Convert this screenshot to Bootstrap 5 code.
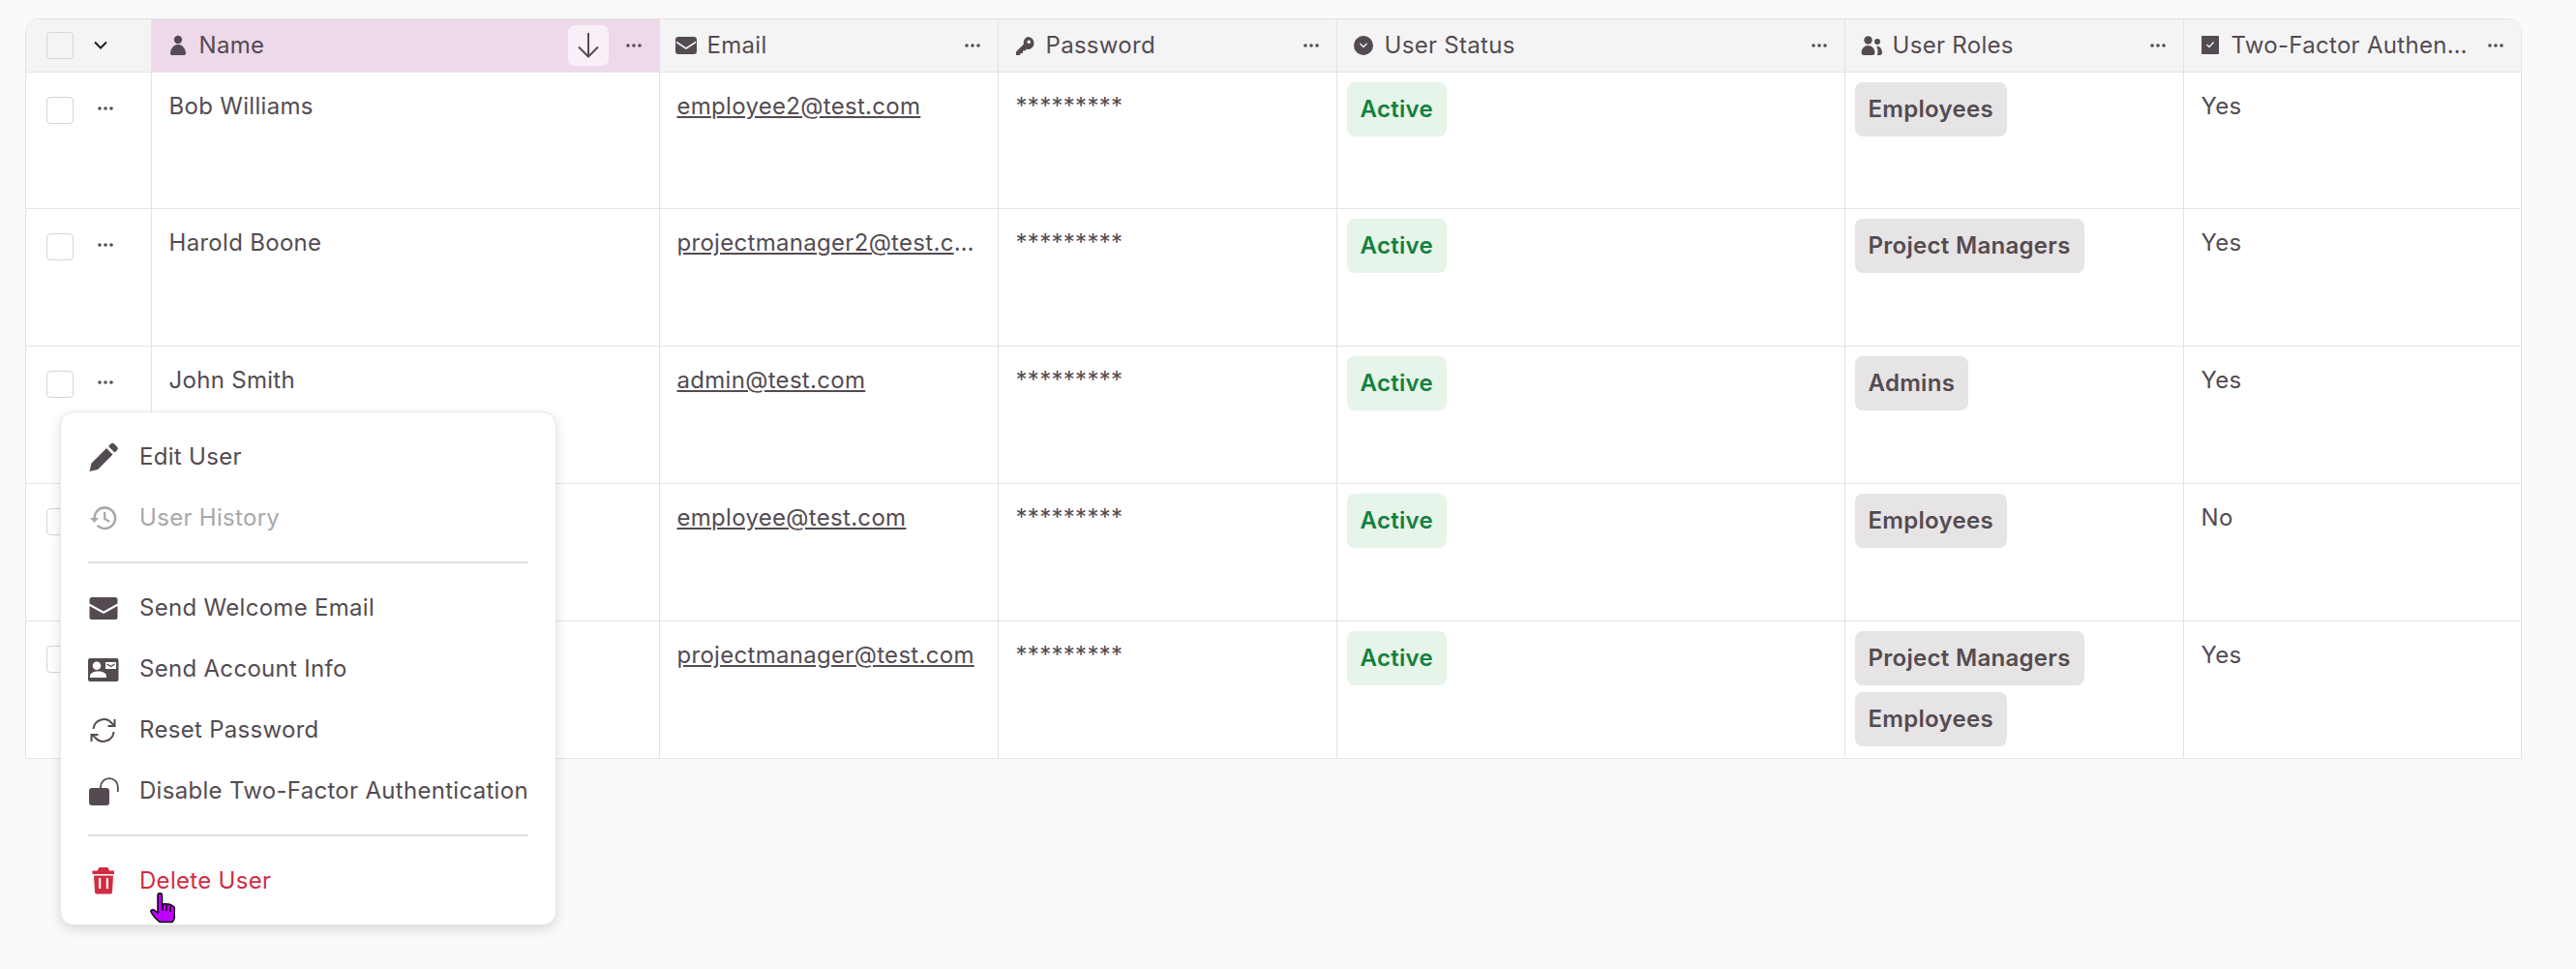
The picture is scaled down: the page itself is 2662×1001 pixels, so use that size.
<!DOCTYPE html>
<html lang="en"><head><meta charset="utf-8"><title>Users</title>
<link href="https://cdn.jsdelivr.net/npm/bootstrap@5.3.0/dist/css/bootstrap.min.css" rel="stylesheet">
<style>
html,body{height:100%}
body{background:#fafafa;font-family:Inter,"Liberation Sans",sans-serif;font-size:24px;letter-spacing:.3px;color:#544b52;position:relative;margin:0;overflow:hidden}
.page-wrap{padding:19px 56px 0 26px}
.grid-box{border:1px solid #e4e2e3;border-top-left-radius:14px;border-top-right-radius:14px;overflow:hidden;background:#fff;width:2580px}
.grid-table{table-layout:fixed;width:2578px;margin:0;border-collapse:collapse;--bs-table-bg:transparent;--bs-table-color:#544b52;color:#544b52}
.grid-table th,.grid-table td{border:0;border-right:1px solid #e4e2e3;border-bottom:1px solid #e4e2e3;vertical-align:top;font-weight:400}
.grid-table th:last-child,.grid-table td:last-child{border-right:0}
.grid-table tr:last-child td{border-bottom:0}
.grid-table th{background:#f4f4f4;height:54px;padding:1px 17px 0 16px;vertical-align:middle}
.grid-table th.sorted{background:#eed9eb}
.grid-table td{height:141.75px;padding:17px 17px 14px 18px;line-height:36px}
.grid-table td.tag-cell{padding:10px 10px 11px}
.grid-table td.sel-cell,.grid-table th.sel-cell{padding:0 0 0 21px}
.grid-table td.sel-cell{padding-top:25px}
.grid-table a{color:#544b52}
.head-flex{display:flex;align-items:center;height:100%}
.head-ico{width:22px;height:22px;fill:#544b52;margin-right:11px;flex:none}
.head-label{flex:1;min-width:0;white-space:nowrap}
.dots-ico{width:18px;height:6px;fill:#544b52;flex:none}
.row-dots{margin-left:24px;margin-bottom:4px}
.chev-ico{margin-left:21px}
.sort-chip{width:42px;height:42px;border-radius:7px;background:#f9eff8;display:flex;align-items:center;justify-content:center;margin-right:17px;flex:none}
.fake-check{width:28px;height:28px;border:1px solid #d6d4d5;border-radius:4px;background:#fff;flex:none}
th .fake-check{background:#f4f4f4}
.sel-flex{display:flex;align-items:center}
.cell-trunc{white-space:nowrap}
.pill-tag{display:block;width:max-content;font-weight:600;padding:0 14px;height:56px;line-height:56px;border-radius:8px}
.pill-tag+.pill-tag{margin-top:7px}
.pill-ok{background:#e6f4e9;color:#13803f}
.pill-gray{background:#e6e4e5;color:#544b52}
.row-menu{position:absolute;left:62px;top:425px;width:513px;padding:14px 28px;background:#fff;border:1px solid #e9e7e8;border-radius:14px;box-shadow:0 4px 12px rgba(60,50,60,.16);z-index:5}
.menu-line{display:flex;align-items:center;height:63px;white-space:nowrap;color:#544b52}
.menu-line.off{color:#aaa6a9}
.menu-line.del{color:#d12c42}
.menu-ico{width:32px;height:32px;fill:currentColor;flex:none;margin-right:21px}
.menu-sep{height:2px;background:#e2dfe0;margin:14px 0}
.hand-cursor{position:absolute;left:155px;top:922px;width:26px;height:32px;z-index:6}
</style></head><body>
<div class="page-wrap">
<div class="grid-box">
<table class="table grid-table">
<colgroup><col style="width:129px"><col style="width:525px"><col style="width:350px"><col style="width:350px"><col style="width:525px"><col style="width:350px"><col style="width:349px"></colgroup>
<thead><tr>
<th class="sel-cell"><div class="sel-flex"><span class="fake-check"></span><svg class="chev-ico" width="14" height="9" viewBox="0 0 14 9" fill="none" stroke="#1e1a1d" stroke-width="2"><path d="M1 1.500 7 7.500 13 1.500"/></svg></div></th>
<th class="sorted"><div class="head-flex"><svg class="head-ico" viewBox="0 0 22 22"><circle cx="11" cy="5" r="4.200"/><path d="M11 10c-4 0-7 3-8 8.500C3 20.500 4 21 5 21h12c1 0 2-.5 2-2.500C18 13 15 10 11 10z"/></svg><span class="head-label">Name</span><span class="sort-chip"><svg width="22" height="26" viewBox="0 0 22 26" fill="none" stroke="#544b52" stroke-width="2"><path d="M11 0V24.500M1 14.500 11 24.500 21 14.500"/></svg></span><svg class="dots-ico" viewBox="0 0 18 6"><circle cx="3" cy="3" r="1.800"/><circle cx="9" cy="3" r="1.800"/><circle cx="15" cy="3" r="1.800"/></svg></div></th>
<th><div class="head-flex"><svg class="head-ico" viewBox="0 0 22 22"><path fill-rule="evenodd" d="M3 2h16a3 3 0 0 1 3 3v12a3 3 0 0 1-3 3H3a3 3 0 0 1-3-3V5a3 3 0 0 1 3-3zM1 6.500v2l10 6.500 10-6.500v-2l-10 6.500z"/></svg><span class="head-label">Email</span><svg class="dots-ico" viewBox="0 0 18 6"><circle cx="3" cy="3" r="1.800"/><circle cx="9" cy="3" r="1.800"/><circle cx="15" cy="3" r="1.800"/></svg></div></th>
<th><div class="head-flex"><svg class="head-ico" viewBox="0 0 22 22"><path fill-rule="evenodd" d="M14 2a6.500 6.500 0 0 1 2 12.700c-1 .3-2.200.3-3.200 0L11 16.500H9V19H7l-1.500 2H2v-3.500l7.800-7.800A6.500 6.500 0 0 1 14 2zm1.200 3.500a1.800 1.800 0 1 0 0 3.600 1.800 1.800 0 0 0 0-3.600z"/></svg><span class="head-label">Password</span><svg class="dots-ico" viewBox="0 0 18 6"><circle cx="3" cy="3" r="1.800"/><circle cx="9" cy="3" r="1.800"/><circle cx="15" cy="3" r="1.800"/></svg></div></th>
<th><div class="head-flex"><svg class="head-ico" viewBox="0 0 22 22"><path fill-rule="evenodd" d="M11 1a10 10 0 1 1 0 20 10 10 0 0 1 0-20zM7 9.500l4 4 4-4-1-1-3 3-3-3z"/></svg><span class="head-label">User Status</span><svg class="dots-ico" viewBox="0 0 18 6"><circle cx="3" cy="3" r="1.800"/><circle cx="9" cy="3" r="1.800"/><circle cx="15" cy="3" r="1.800"/></svg></div></th>
<th><div class="head-flex"><svg class="head-ico" viewBox="0 0 22 22"><circle cx="7.500" cy="5.500" r="4.200"/><circle cx="17" cy="7" r="3"/><path d="M7.500 11C3.500 11 1 14 .5 18c0 2 1 3 2.500 3h9c1.500 0 2.500-1 2.500-3-.5-4-3-7-7-7z"/><path d="M16 11.500c1 1.500 1.500 4 1.500 6.500 0 1-.2 2-.8 3h2.800c1.500 0 2.500-1 2.500-2.500 0-4-2.500-7-6-7z"/></svg><span class="head-label">User Roles</span><svg class="dots-ico" viewBox="0 0 18 6"><circle cx="3" cy="3" r="1.800"/><circle cx="9" cy="3" r="1.800"/><circle cx="15" cy="3" r="1.800"/></svg></div></th>
<th><div class="head-flex"><svg class="head-ico" viewBox="0 0 22 22"><path fill-rule="evenodd" d="M3 1h16a1 1 0 0 1 1 1v17a1 1 0 0 1-1 1H3a1 1 0 0 1-1-1V2a1 1 0 0 1 1-1zM7 10.500l3 3 5-5.500-1-.9-4 4.400-2.100-2z"/></svg><span class="head-label">Two-Factor Authen…</span><svg class="dots-ico" viewBox="0 0 18 6"><circle cx="3" cy="3" r="1.800"/><circle cx="9" cy="3" r="1.800"/><circle cx="15" cy="3" r="1.800"/></svg></div></th>
</tr></thead>
<tbody>
<tr><td class="sel-cell"><div class="sel-flex"><span class="fake-check"></span><svg class="row-dots" width="18" height="6" viewBox="0 0 18 6" fill="#544b52"><circle cx="3" cy="3" r="1.800"/><circle cx="9" cy="3" r="1.800"/><circle cx="15" cy="3" r="1.800"/></svg></div></td><td>Bob Williams</td><td><div class="cell-trunc"><a href="#">employee2@test.com</a></div></td><td>*********</td><td class="tag-cell"><span class="pill-tag pill-ok">Active</span></td><td class="tag-cell"><span class="pill-tag pill-gray">Employees</span></td><td>Yes</td></tr>
<tr><td class="sel-cell"><div class="sel-flex"><span class="fake-check"></span><svg class="row-dots" width="18" height="6" viewBox="0 0 18 6" fill="#544b52"><circle cx="3" cy="3" r="1.800"/><circle cx="9" cy="3" r="1.800"/><circle cx="15" cy="3" r="1.800"/></svg></div></td><td>Harold Boone</td><td><div class="cell-trunc"><a href="#">projectmanager2@test.c</a>…</div></td><td>*********</td><td class="tag-cell"><span class="pill-tag pill-ok">Active</span></td><td class="tag-cell"><span class="pill-tag pill-gray">Project Managers</span></td><td>Yes</td></tr>
<tr><td class="sel-cell"><div class="sel-flex"><span class="fake-check"></span><svg class="row-dots" width="18" height="6" viewBox="0 0 18 6" fill="#544b52"><circle cx="3" cy="3" r="1.800"/><circle cx="9" cy="3" r="1.800"/><circle cx="15" cy="3" r="1.800"/></svg></div></td><td>John Smith</td><td><div class="cell-trunc"><a href="#">admin@test.com</a></div></td><td>*********</td><td class="tag-cell"><span class="pill-tag pill-ok">Active</span></td><td class="tag-cell"><span class="pill-tag pill-gray">Admins</span></td><td>Yes</td></tr>
<tr><td class="sel-cell"><div class="sel-flex"><span class="fake-check"></span></div></td><td></td><td><div class="cell-trunc"><a href="#">employee@test.com</a></div></td><td>*********</td><td class="tag-cell"><span class="pill-tag pill-ok">Active</span></td><td class="tag-cell"><span class="pill-tag pill-gray">Employees</span></td><td>No</td></tr>
<tr><td class="sel-cell"><div class="sel-flex"><span class="fake-check"></span></div></td><td></td><td><div class="cell-trunc"><a href="#">projectmanager@test.com</a></div></td><td>*********</td><td class="tag-cell"><span class="pill-tag pill-ok">Active</span></td><td class="tag-cell"><span class="pill-tag pill-gray">Project Managers</span><span class="pill-tag pill-gray">Employees</span></td><td>Yes</td></tr>
</tbody></table>
</div></div>
<div class="row-menu">
<div class="menu-line"><svg class="menu-ico" viewBox="0 0 32 32"><path d="M1.500 31l2-8.500L19 7l6.500 6.500L10 29zM21 5l2.500-2.500c1-1 2.500-1 3.500 0l3 3c1 1 1 2.500 0 3.500l-2.500 2.500z"/></svg>Edit User</div>
<div class="menu-line off"><svg class="menu-ico" viewBox="0 0 32 32"><path d="M2 16h3.300a12 12 0 1 1 3.500 8.600l1.700-1.700A9.500 9.500 0 1 0 7.800 16H11l-4.500 5z"/><path d="M16 10h2.300v6.300l4.500 2.700-1.100 1.800-5.700-3.400z"/></svg>User History</div>
<div class="menu-sep"></div>
<div class="menu-line"><svg class="menu-ico" viewBox="0 0 32 32"><path fill-rule="evenodd" d="M4 5h24a2.500 2.500 0 0 1 2.500 2.500v18A2.500 2.500 0 0 1 28 28H4a2.500 2.500 0 0 1-2.500-2.500v-18A2.500 2.500 0 0 1 4 5zM1.500 11.500V14L16 22l14.500-8v-2.500L16 19.500z"/></svg>Send Welcome Email</div>
<div class="menu-line"><svg class="menu-ico" viewBox="0 0 32 32"><path fill-rule="evenodd" d="M2 5h27.500a2 2 0 0 1 2 2v20a2 2 0 0 1-2 2H2a2 2 0 0 1-2-2V7a2 2 0 0 1 2-2zM9 8.500a4.300 4.300 0 1 0 0 8.600 4.300 4.300 0 0 0 0-8.600zM2 25h17v-1.500c0-3-3.500-5-8.500-5s-8.500 2-8.500 5zM18 9v7h11V9zm1.500 1.200 4 2.500 4-2.500v1.500l-4 2.500-4-2.500z"/></svg>Send Account Info</div>
<div class="menu-line"><svg class="menu-ico" viewBox="0 0 32 32"><path d="M5.500 15A10.800 10.800 0 0 1 24.500 9l3 3M26.500 18A10.800 10.800 0 0 1 7.500 24l-4-3" fill="none" stroke="currentColor" stroke-width="2"/><path d="M27.500 5v7h-7M3.500 28v-7h7" fill="none" stroke="currentColor" stroke-width="2"/></svg>Reset Password</div>
<div class="menu-line"><svg class="menu-ico" viewBox="0 0 32 32"><rect x="1" y="13" width="21" height="18" rx="3"/><path d="M13 14v-2a8.900 8.900 0 0 1 17.800 0v5" fill="none" stroke="currentColor" stroke-width="1.800"/></svg>Disable Two-Factor Authentication</div>
<div class="menu-sep"></div>
<div class="menu-line del"><svg class="menu-ico" viewBox="0 0 32 32"><path fill-rule="evenodd" d="M11.500 2h9l1.500 3.500h5V9H4.500V5.500h5zM6 10.500h20l-1 17a2 2 0 0 1-2 1.900H9a2 2 0 0 1-2-1.900zM11 13v11h2.200V13zm7.800 0v11H21V13z"/></svg>Delete User</div>
</div>
<svg class="hand-cursor" viewBox="0 0 26 32"><path d="M8 3c0-3 4.500-3 4.500 0v9c3.500-.5 9 0 11.500 2 1 1 1.500 2 1.500 3v7c0 3-1 5-2.500 6.500H10C7 28 3 24 1 20c-.5-1.500 1-3 3-2l4 3z" fill="#bf00ff" stroke="#000" stroke-width="1.500"/><path d="M13 13v6M17 13v6M21 14v6" stroke="#000" stroke-width="1.500"/></svg>
</body></html>
